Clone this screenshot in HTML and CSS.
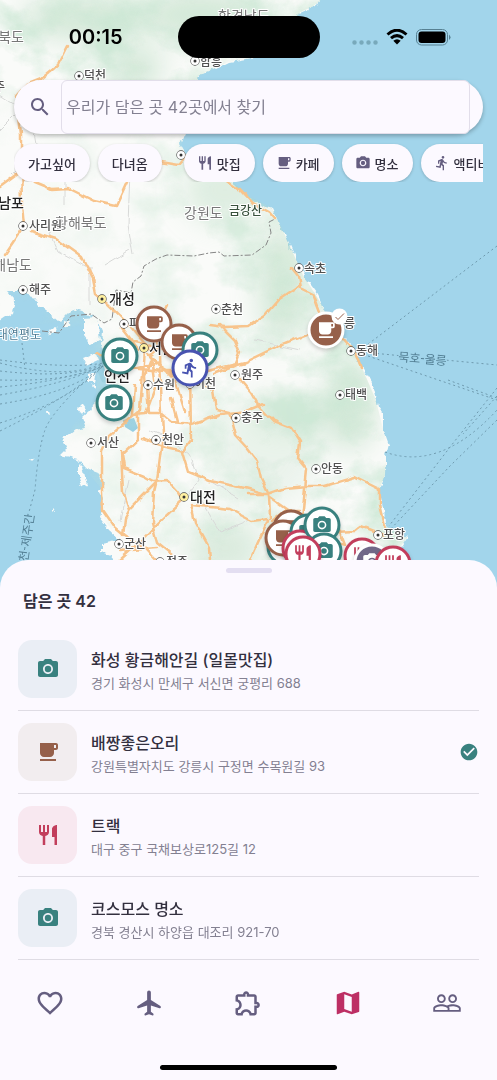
FILE: index.html
```html
<!DOCTYPE html>
<html lang="ko">
<head>
<meta charset="utf-8">
<meta name="viewport" content="width=device-width, initial-scale=1">
<title>담은 곳</title>
<link rel="stylesheet" href="styles.css">
</head>
<body>
<svg class="sprite" aria-hidden="true">
  <symbol id="search" viewBox="0 0 24 24"><path d="M15.5 14h-.79l-.28-.27C15.41 12.59 16 11.11 16 9.5 16 5.91 13.09 3 9.5 3S3 5.91 3 9.5 5.91 16 9.5 16c1.61 0 3.09-.59 4.23-1.57l.27.28v.79l5 4.99L20.49 19l-4.99-5zm-6 0C7.01 14 5 11.99 5 9.5S7.01 5 9.5 5 14 7.01 14 9.5 11.99 14 9.5 14z"/></symbol>
  <symbol id="food" viewBox="0 0 24 24"><path d="M11 9H9V2H7v7H5V2H3v7c0 2.12 1.66 3.84 3.75 3.97V22h2.5v-9.03C11.34 12.84 13 11.12 13 9V2h-2v7zm5-3v8h2.500v8H21V2c-2.760 0-5 2.240-5 4z"/></symbol>
  <symbol id="cafe" viewBox="0 0 24 24"><path d="M20 3H4v10c0 2.210 1.790 4 4 4h6c2.210 0 4-1.790 4-4v-3h2c1.110 0 2-.9 2-2V5c0-1.110-.89-2-2-2zm0 5h-2V5h2v3zM4 19h16v2H4z"/></symbol>
  <symbol id="camera" viewBox="0 0 24 24"><circle cx="12" cy="12" r="3.2"/><path d="M9 2L7.170 4H4c-1.100 0-2 .9-2 2v12c0 1.100.9 2 2 2h16c1.100 0 2-.9 2-2V6c0-1.100-.9-2-2-2h-3.170L15 2H9zm3 15c-2.760 0-5-2.240-5-5s2.240-5 5-5 5 2.240 5 5-2.240 5-5 5z"/></symbol>
  <symbol id="run" viewBox="0 0 24 24"><path d="M13.490 5.480c1.100 0 2-.9 2-2s-.9-2-2-2-2 .9-2 2 .9 2 2 2zm-3.600 13.900l1-4.400 2.100 2v6h2v-7.500l-2.100-2 .6-3c1.300 1.500 3.300 2.500 5.500 2.500v-2c-1.900 0-3.500-1-4.300-2.400l-1-1.600c-.4-.6-1-1-1.700-1-.3 0-.5.1-.8.1l-5.200 2.200v4.700h2v-3.400l1.800-.7-1.600 8.100-4.900-1-.4 2 7 1.400z"/></symbol>
  <symbol id="heart" viewBox="0 0 24 24"><path d="M16.500 3c-1.740 0-3.410.81-4.500 2.090C10.910 3.810 9.240 3 7.500 3 4.420 3 2 5.420 2 8.500c0 3.780 3.400 6.860 8.550 11.540L12 21.350l1.450-1.320C18.600 15.360 22 12.280 22 8.500 22 5.420 19.580 3 16.500 3zm-4.400 15.550l-.1.1-.1-.1C7.140 14.240 4 11.390 4 8.500 4 6.500 5.500 5 7.500 5c1.540 0 3.040.99 3.570 2.360h1.870C13.460 5.990 14.960 5 16.500 5c2 0 3.500 1.500 3.500 3.500 0 2.890-3.140 5.740-7.900 10.050z"/></symbol>
  <symbol id="flight" viewBox="0 0 24 24"><path d="M21.500 15.400c0-.5-.3-1-.7-1.200L13.500 9.500V3.500c0-.83-.67-1.500-1.500-1.500s-1.500.67-1.500 1.500v6l-7.300 4.700c-.4.200-.7.700-.7 1.200 0 .6.500.9 1.100.7l6.900-2.200V19l-1.800 1.300c-.2.100-.3.300-.3.500v.6c0 .4.300.6.700.5L12 21l2.900.9c.4.100.7-.1.7-.5v-.6c0-.2-.1-.4-.3-.5L13.500 19v-5.100l6.900 2.200c.6.200 1.100-.1 1.100-.7z"/></symbol>
  <symbol id="puzzle" viewBox="0 0 24 24"><path d="M10.500 4.500c.28 0 .5.22.5.5v2h6v6h2c.28 0 .5.22.5.5s-.22.5-.5.5h-2v6h-2.120c-.68-1.750-2.390-3-4.380-3s-3.700 1.250-4.380 3H4v-2.120c1.750-.68 3-2.390 3-4.380 0-1.990-1.240-3.700-2.990-4.380L4 7h6V5c0-.28.22-.5.5-.5m0-2C9.120 2.500 8 3.620 8 5H4c-1.100 0-1.990.9-1.990 2v3.800h.29c1.490 0 2.700 1.210 2.700 2.700s-1.210 2.700-2.700 2.700H2V20c0 1.100.9 2 2 2h3.800v-.3c0-1.490 1.210-2.700 2.700-2.700s2.700 1.210 2.700 2.700v.3H17c1.100 0 2-.9 2-2v-4c1.380 0 2.500-1.120 2.500-2.500S20.380 11 19 11V7c0-1.100-.9-2-2-2h-4c0-1.380-1.120-2.500-2.500-2.500z"/></symbol>
  <symbol id="map" viewBox="0 0 24 24"><path d="M20.500 3l-.16.03L15 5.100 9 3 3.360 4.900c-.21.07-.36.25-.36.48V20.500c0 .28.22.5.5.5l.16-.03L9 18.900l6 2.100 5.640-1.900c.21-.07.36-.25.36-.48V3.500c0-.28-.22-.5-.5-.5zM15 19l-6-2.110V5l6 2.110V19z"/></symbol>
  <symbol id="people" viewBox="0 0 24 24"><path d="M16.500 13c-1.200 0-3.070.34-4.500 1-1.430-.67-3.300-1-4.500-1C5.330 13 1 14.080 1 16.250V19h22v-2.750c0-2.170-4.330-3.250-6.500-3.250zm-4 4.500h-10v-1.250c0-.54 2.560-1.750 5-1.750s5 1.210 5 1.750v1.250zm9 0H14v-1.250c0-.46-.2-.86-.52-1.220.88-.3 1.960-.53 3.020-.53 2.440 0 5 1.210 5 1.750v1.250zM7.500 12c1.930 0 3.500-1.570 3.500-3.500S9.430 5 7.500 5 4 6.570 4 8.500 5.570 12 7.500 12zm0-5.500c1.100 0 2 .9 2 2s-.9 2-2 2-2-.9-2-2 .9-2 2-2zm9 5.500c1.930 0 3.500-1.570 3.500-3.500S18.430 5 16.500 5 13 6.570 13 8.500s1.570 3.500 3.500 3.500zm0-5.500c1.100 0 2 .9 2 2s-.9 2-2 2-2-.9-2-2 .9-2 2-2z"/></symbol>
  <symbol id="done" viewBox="0 0 24 24"><path d="M12 2C6.480 2 2 6.480 2 12s4.480 10 10 10 10-4.480 10-10S17.520 2 12 2zm-2 15l-5-5 1.410-1.410L10 14.170l7.590-7.590L19 8l-9 9z"/></symbol>
  <symbol id="check" viewBox="0 0 12 12"><path d="M2 6.500 4.500 9 10.500 3" fill="none" stroke="currentColor"/></symbol>
</svg>

<div class="screen">
  <section class="map-area" aria-label="지도">
    <div class="map-canvas">
      <svg class="map-art" viewBox="0 0 497 620" aria-hidden="true">
        <defs>
          <filter id="rough" x="0" y="0" width="1" height="1"><feTurbulence type="fractalNoise" baseFrequency=".12" numOctaves="3" seed="4"/><feDisplacementMap in="SourceGraphic" scale="7" xChannelSelector="R" yChannelSelector="G"/></filter>
          <filter id="bend" filterUnits="userSpaceOnUse" x="0" y="0" width="497" height="620"><feTurbulence type="fractalNoise" baseFrequency=".07" numOctaves="2" seed="9"/><feDisplacementMap in="SourceGraphic" scale="6" xChannelSelector="R" yChannelSelector="G"/></filter>
          <filter id="soft" x="-50%" y="-50%" width="200%" height="200%"><feGaussianBlur stdDeviation="14"/></filter>
          <filter id="relief" x="0" y="0" width="1" height="1"><feTurbulence type="fractalNoise" baseFrequency=".022 .028" numOctaves="5" seed="12"/><feColorMatrix values="0 0 0 0 .60  0 0 0 0 .80  0 0 0 0 .66  2.6 0 0 0 -1.050"/></filter>
          <clipPath id="land-clip"><path d="M0 0H321L312 7 300 12 297 19 280 40 252 58 228 62 214 69 198 76 196 110 186 132 181 145 190 160 215 172 235 184 250 197 272 208 285 235 303 275 322 305 332 325 350 345 362 368 376 400 382 425 388 445 385 475 379 490 384 525 407 538 398 550 393 620H105L112 552 120 540 104 520 102 490 78 460 62 440 96 396 98 360 60 322 0 330Z"/></clipPath>
          <linearGradient id="fade" x1="0" x2="1"><stop offset=".1" stop-color="#fff" stop-opacity=".12"/><stop offset=".6" stop-color="#fff" stop-opacity=".85"/></linearGradient>
          <mask id="relief-mask"><rect width="497" height="620" fill="url(#fade)"/><ellipse cx="90" cy="40" rx="110" ry="80" fill="#fff" opacity=".8" filter="url(#soft)"/></mask>
        </defs>
        <rect width="497" height="620" fill="#a2d5eb"/>
        <g filter="url(#rough)" fill="#fafbf9">
          <path d="M-9-9H326L316 6 300 12 297 19 280 40 252 58 228 62 214 69 198 76 196 110 186 132 181 145 190 160 215 172 235 184 248 197 262 206 273 209 278 220 285 235 296 260 305 277 317 293 324 308 330 321 350 345 362 368 374 388 378 405 383 412 383 428 389 445 386 457 386 475 379 490 383 507 384 525 392 533 408 537 399 550 394 560 396 630H107L112 555 101 551 101 544 121 540 110 530 100 517 104 500 98 490 104 484 99 474 88 470 78 459 60 455 66 449 62 440 75 430 86 428 82 417 91 409 98 396 110 384 101 374 104 360 101 345 102 332 96 318 82 311 73 308 65 316 60 322 50 313 38 304 28 291 7 291 15 300 12 313-9 327Z"/>
          <path d="M84 318 97 317 100 340 91 345 84 336ZM78 410 84 404 87 408 82 415ZM79 463 83 467 87 486 82 488 79 476ZM83 358 95 353 98 360 87 365ZM88 374 96 372 94 381 88 381ZM62 323 68 319 71 325 65 328ZM48 330 55 326 57 332 50 335ZM91 385 94 383 94 389ZM31 461 33 459 34 462ZM46 412 49 410 50 414ZM53 511 55 509 56 512Z"/>
        </g>
        <path d="M123 420 134 418 138 428 133 432 125 427ZM101 357 105 370 111 384 102 382 97 370Z" fill="#94cde4"/>
        <g clip-path="url(#land-clip)">
          <g filter="url(#soft)" fill="#abd5b5" opacity=".5">
            <ellipse cx="85" cy="18" rx="65" ry="22"/><ellipse cx="200" cy="15" rx="60" ry="24"/><ellipse cx="135" cy="68" rx="28" ry="22"/><ellipse cx="225" cy="190" rx="42" ry="35" opacity=".7"/><ellipse cx="283" cy="285" rx="24" ry="60"/><ellipse cx="350" cy="405" rx="26" ry="46"/><ellipse cx="292" cy="416" rx="38" ry="14"/><ellipse cx="225" cy="548" rx="38" ry="30" opacity=".8"/><ellipse cx="265" cy="450" rx="52" ry="55" opacity=".4"/>
          </g>
          <rect width="497" height="620" filter="url(#relief)" mask="url(#relief-mask)"/>
        </g>
        <g class="borders" filter="url(#bend)">
          <path d="M0 96 32 116 38 150 65 172 65 205M38 150 12 175M45 222 58 251 90 268 90 305M122 155 130 170 128 225 133 255M150 430 168 438 190 454 198 480 183 502M129 480 120 520M195 490 220 532 250 520M130 250 105 265M255 340 300 350M208 480 238 498M20 110 0 130"/>
        </g>
        <g class="frontier"><path d="M42 331 59 333 71 316 91 314 104 323 112 319 116 290 131 293 133 282 141 276 144 266 156 259 167 255 194 256 209 253 219 252 224 256 252 255 266 245 271 233 269 222 275 219"/></g>
        <g class="ferries">
          <path d="M0 360Q70 369 104 363M0 363Q65 380 101 364M0 371Q70 379 102 365M0 380Q70 382 103 366M0 387Q60 382 103 366M0 395Q65 384 103 366M0 404Q72 393 103 366M0 423Q72 400 103 366M0 431Q75 394 103 366M22 343 25 369M82 384Q50 415 45 430Q38 450 35 490L29 512M29 540 10 580"/>
          <path d="M497 246 367 345M372 353 497 365M368 356 497 400M448 380 497 398M385 452Q440 472 497 410M497 388 454 442 389 526M497 420 450 466 387 533M497 396 463 434"/>
        </g>
        <g class="roads" filter="url(#bend)">
          <path d="M67 47 58 65 42 78 27 84 17 95 19 116 21 135 21 160 22 205 24 226 5 254M0 187 22 171 35 182 52 189 68 188 94 201 116 206 128 180M160 162 178 165 187 155M31 231 57 239 82 257 93 279 96 294 103 300M225 180 240 190 252 203 269 212 275 219M291 267 299 277 301 288 313 294 321 315 335 330 355 353 361 368M299 286 278 300 265 315 248 326 225 327 210 325M315 331 280 345 245 362 207 371 165 371 125 368M220 325 235 340 240 353 235 366 214 374"/>
          <path d="M103 300 130 326 150 350M122 329 139 351M167 306 158 325M100 355 125 340 150 345 171 352M97 353 128 370 155 363 185 382M145 350 140 410 128 420 109 437 102 452 102 490 103 510 114 526 125 535 145 549 155 560M135 385 133 414 145 413 155 386 151 358 145 375 148 413 160 413 171 422 192 424 220 414 247 411 264 404M138 413 138 440 122 455 124 468 144 476 153 481 167 480 178 492 183 500 153 528 142 540 120 560M143 439 165 447 184 451 191 441 190 365M160 355 162 414 163 434 157 480 154 492 152 523 157 543 178 560M157 482 130 509 125 518 123 535M121 452 123 492 129 510M182 452 188 472 210 481 245 488 263 493M191 505 229 509 252 521 267 519M191 504 195 522 209 547 210 560M171 398 177 421M196 377 213 390 216 409 229 412 235 435 247 448 257 461 261 478 269 495 270 518"/>
          <path d="M240 379 252 393 260 407 273 421 291 428 300 442 298 459 307 470 302 518M247 494 268 494 285 488 308 486 325 486 355 477 379 489 379 505 385 529M269 496 300 518M268 520 250 560M335 532 355 531 361 526 385 535M272 521 285 510 299 510M340 532 345 545 325 540M151 324 159 348 151 355M148 354 175 380 185 412M120 551 157 548M152 325 158 317"/>
        </g>
        <g class="places">
          <g class="dots"><circle cx="79" cy="76" r="4"/><circle cx="195" cy="61" r="4"/><circle cx="181" cy="155" r="4"/><circle cx="23" cy="226" r="4"/><circle cx="23" cy="290" r="4"/><circle cx="124" cy="324" r="4"/><circle cx="148" cy="385" r="4"/><circle cx="190" cy="384" r="4"/><circle cx="216" cy="309" r="4"/><circle cx="235" cy="375" r="4"/><circle cx="299" cy="268" r="4"/><circle cx="351" cy="351" r="4"/><circle cx="340" cy="395" r="4"/><circle cx="236" cy="418" r="4"/><circle cx="316" cy="469" r="4"/><circle cx="378" cy="535" r="4"/><circle cx="91" cy="443" r="4"/><circle cx="156" cy="440" r="4"/><circle cx="119" cy="544" r="4"/><circle cx="160" cy="562" r="4"/></g>
          <g class="dots capital"><circle cx="102" cy="299" r="4"/><circle cx="144" cy="348" r="4"/><circle cx="184" cy="497" r="4"/></g>
          <path class="cores" d="M79 76h0M195 61h0M181 155h0M23 226h0M23 290h0M124 324h0M148 385h0M190 384h0M216 309h0M235 375h0M299 268h0M351 351h0M340 395h0M236 418h0M316 469h0M378 535h0M91 443h0M156 440h0M119 544h0M160 562h0M102 299h0M144 348h0M184 497h0"/>
          <g class="region"><text x="24" y="42" text-anchor="end">평안북도</text><text x="218" y="21">함경남도</text><text x="184" y="218">강원도</text><text x="55" y="228">황해북도</text><text x="32" y="270" text-anchor="end">황해남도</text></g>
          <g class="town"><text x="84" y="80">덕천</text><text x="200" y="66">함흥</text><text x="5" y="91" text-anchor="end">원주</text><text x="29" y="230">사리원</text><text x="29" y="294">해주</text><text x="129" y="328">파주</text><text x="153" y="389">수원</text><text x="194" y="388">이천</text><text x="221" y="314">춘천</text><text x="241" y="379">원주</text><text x="304" y="273">속초</text><text x="333" y="328">강릉</text><text x="356" y="355">동해</text><text x="345" y="399">태백</text><text x="241" y="422">충주</text><text x="321" y="473">안동</text><text x="383" y="539">포항</text><text x="97" y="447">서산</text><text x="162" y="444">천안</text><text x="124" y="548">군산</text><text x="166" y="566">전주</text></g>
          <g class="city"><text x="24" y="208" text-anchor="end">남포</text><text x="109" y="304">개성</text><text x="149" y="353">서울</text><text x="104" y="381">인천</text><text x="190" y="502">대전</text></g>
          <text class="peak" x="229" y="215">금강산</text>
          <text class="isle" x="41" y="339" text-anchor="end">대연평도</text>
          <text class="route" transform="translate(398 361) rotate(5)">묵호-울릉</text>
          <text class="route" transform="translate(26 573) rotate(-82)">인천-제주간</text>
        </g>
      </svg>
      <button class="pin brown" style="--x:154;--y:324" aria-label="카페"><svg><use href="#cafe"/></svg></button>
      <button class="pin brown" style="--x:179;--y:342" aria-label="카페"><svg><use href="#cafe"/></svg></button>
      <button class="pin teal" style="--x:200;--y:350" aria-label="명소"><svg><use href="#camera"/></svg></button>
      <button class="pin blue" style="--x:190;--y:368" aria-label="액티비티"><svg><use href="#run"/></svg></button>
      <button class="pin teal" style="--x:114;--y:403" aria-label="명소"><svg><use href="#camera"/></svg></button>
      <button class="pin teal" style="--x:120;--y:356" aria-label="명소"><svg><use href="#camera"/></svg></button>
      <button class="pin brown visited" style="--x:326;--y:330" aria-label="다녀온 카페"><svg><use href="#cafe"/></svg><span class="tick"><svg><use href="#check"/></svg></span></button>
      <button class="pin brown" style="--x:291;--y:528" aria-label="카페"><svg><use href="#cafe"/></svg></button>
      <button class="pin teal" style="--x:285;--y:547" aria-label="명소"><svg><use href="#camera"/></svg></button>
      <button class="pin brown" style="--x:283;--y:538" aria-label="카페"><svg><use href="#cafe"/></svg></button>
      <button class="pin teal" style="--x:308;--y:532" aria-label="명소"><svg><use href="#camera"/></svg></button>
      <button class="pin red" style="--x:300;--y:548" aria-label="맛집"><svg><use href="#food"/></svg></button>
      <button class="pin teal" style="--x:322;--y:525" aria-label="명소"><svg><use href="#camera"/></svg></button>
      <button class="pin teal" style="--x:324;--y:551" aria-label="명소"><svg><use href="#camera"/></svg></button>
      <button class="pin red" style="--x:303;--y:554" aria-label="맛집"><svg><use href="#food"/></svg></button>
      <button class="pin red" style="--x:362;--y:556" aria-label="맛집"><svg><use href="#food"/></svg></button>
      <button class="pin violet visited" style="--x:372;--y:562" aria-label="다녀온 곳"><svg><use href="#camera"/></svg></button>
      <button class="pin red" style="--x:393;--y:564" aria-label="맛집"><svg><use href="#food"/></svg></button>
    </div>

    <div class="overlay">
      <div class="status">
        <time class="clock">00:15</time>
        <span class="island"></span>
        <span class="signals">
          <svg class="cell" viewBox="0 0 26 5"><path d="M2.500 2.500h0M9.500 2.500h0M16.500 2.500h0M23.500 2.500h0" stroke="#78a9bb" stroke-width="4.500" stroke-linecap="round"/></svg>
          <svg class="wifi" viewBox="0 0 22 16"><path d="M1.500 5.500Q11-3 20.500 5.500M5 9.200Q11 4 17 9.200" fill="none" stroke="#000" stroke-width="3"/><path d="M7.300 11.700Q11 8.700 14.700 11.700L11 15.600Z"/></svg>
          <svg class="battery" viewBox="0 0 35 17"><rect x=".5" y=".5" width="31" height="15.500" rx="5" fill="none" stroke="#568092"/><rect x="2.500" y="2.500" width="27" height="11.500" rx="3"/><path d="M33 5.500q3 2.750 0 5.500z" fill="#568092"/></svg>
        </span>
      </div>
      <label class="search">
        <svg class="search-icon"><use href="#search"/></svg>
        <input type="search" placeholder="우리가 담은 곳 42곳에서 찾기" aria-label="담은 곳 찾기">
      </label>
      <div class="chips">
        <button class="chip">가고싶어</button>
        <button class="chip">다녀옴</button>
        <button class="chip category-start"><svg><use href="#food"/></svg>맛집</button>
        <button class="chip"><svg><use href="#cafe"/></svg>카페</button>
        <button class="chip"><svg><use href="#camera"/></svg>명소</button>
        <button class="chip"><svg><use href="#run"/></svg>액티비티</button>
      </div>
    </div>
  </section>

  <main class="sheet">
    <span class="grabber"></span>
    <h1>담은 곳 42</h1>
    <ul class="list">
      <li><a class="row" href="#place-1"><span class="tile teal"><svg><use href="#camera"/></svg></span><span class="info"><strong>화성 황금해안길 (일몰맛집)</strong><small>경기 화성시 만세구 서신면 궁평리 688</small></span></a></li>
      <li><a class="row" href="#place-2"><span class="tile brown"><svg><use href="#cafe"/></svg></span><span class="info"><strong>배짱좋은오리</strong><small>강원특별자치도 강릉시 구정면 수목원길 93</small></span><svg class="visited-mark" role="img" aria-label="다녀옴"><use href="#done"/></svg></a></li>
      <li><a class="row" href="#place-3"><span class="tile red"><svg><use href="#food"/></svg></span><span class="info"><strong>트랙</strong><small>대구 중구 국채보상로125길 12</small></span></a></li>
      <li><a class="row" href="#place-4"><span class="tile teal"><svg><use href="#camera"/></svg></span><span class="info"><strong>코스모스 명소</strong><small>경북 경산시 하양읍 대조리 921-70</small></span></a></li>
    </ul>
    <nav class="tabs" aria-label="주 메뉴">
      <a href="#likes" aria-label="좋아요"><svg><use href="#heart"/></svg></a>
      <a href="#trips" aria-label="여행"><svg><use href="#flight"/></svg></a>
      <a href="#puzzle-tab" aria-label="퍼즐"><svg><use href="#puzzle"/></svg></a>
      <a class="current" href="#map-tab" aria-label="지도" aria-current="page"><svg><use href="#map"/></svg></a>
      <a href="#friends" aria-label="친구"><svg><use href="#people"/></svg></a>
    </nav>
    <span class="home-bar"></span>
  </main>
</div>
</body>
</html>
```
FILE: styles.css
```css
:root {
  --surface: #fcf9ff;
  --ink: #33303f;
  --muted: #838091;
  --icon: #655e80;
}

* { box-sizing: border-box; }

body {
  margin: 0;
  background: var(--surface);
  color: var(--ink);
  font-family: Inter, "Noto Sans CJK KR", sans-serif;
}

svg { display: block; fill: currentColor; }
button, input { font: inherit; color: inherit; }
a { color: inherit; text-decoration: none; }
.sprite { position: absolute; width: 0; height: 0; }

.teal { --tone: #39817f; --tint: #eaeef5; }
.brown { --tone: #96604a; --tint: #f2edef; }
.red { --tone: #c23e5c; --tint: #f8e8f0; }
.blue { --tone: #4853b0; }
.violet { --tone: #716888; }

.screen {
  min-height: 100vh;
  display: flex;
  flex-direction: column;
}

/* Map */
.map-area {
  position: relative;
  flex: 1;
  min-height: 300px;
  overflow: hidden;
  background: #a2d5eb;
}
.map-canvas {
  position: absolute;
  top: 0;
  left: 0;
  width: 100%;
  aspect-ratio: 497 / 620;
}
.map-art { width: 100%; height: 100%; }
.borders { fill: none; stroke: #d8d9d8; stroke-width: 1; }
.frontier { fill: none; stroke: #858585; stroke-width: 1; stroke-dasharray: 6 2 2 2; }
.ferries { fill: none; stroke: #6f9aae; stroke-width: 1; stroke-dasharray: 2 3; }
.roads { fill: none; stroke: #f8c48c; stroke-width: 2.5; stroke-linejoin: round; stroke-linecap: round; }
.places {
  font-family: "Noto Sans CJK KR", sans-serif;
  paint-order: stroke;
  stroke: #fff;
  stroke-width: 2;
  stroke-linejoin: round;
}
.dots { fill: #fff; stroke: #4b4b4b; stroke-width: 1.3; }
.capital { fill: #fff0a0; }
.cores { stroke: #333; stroke-width: 3; stroke-linecap: round; }
.town { font-size: 12px; font-weight: 500; fill: #505050; }
.region { font-size: 14px; fill: #777; }
.city { font-size: 14px; font-weight: 500; fill: #222; }
.peak { font-size: 12px; font-weight: 500; fill: #38513c; }
.isle { font-size: 12px; fill: #4d7b93; }
.route { font-size: 12px; fill: #527e93; stroke: #a2d5eb; }

.pin {
  position: absolute;
  left: calc(var(--x) / 497 * 100%);
  top: calc(var(--y) / 620 * 100%);
  width: 37px;
  height: 37px;
  translate: -50% -50%;
  display: grid;
  place-items: center;
  padding: 0;
  border: 3px solid var(--tone);
  border-radius: 50%;
  background: #fff;
  color: var(--tone);
  box-shadow: 0 2px 4px #0003;
}
.pin > svg { width: 21px; height: 21px; }
.pin.visited { border-color: #fff; background: var(--tone); color: #fff; }
.tick {
  position: absolute;
  top: -6px;
  right: -6px;
  width: 16px;
  height: 16px;
  display: grid;
  place-items: center;
  border-radius: 50%;
  background: #fff;
  color: #96604a;
}
.tick svg { width: 12px; height: 12px; }

/* Controls over the map */
.overlay {
  position: relative;
  padding: 0 14px;
  margin-bottom: 48px;
}
.status {
  height: 80px;
  display: grid;
  grid-template-columns: 1fr 142px 1fr;
  align-items: center;
  padding-bottom: 6px;
  color: #000;
}
.clock {
  justify-self: center;
  font-size: 20px;
  font-weight: 600;
}
.island { height: 42px; border-radius: 21px; background: #000; }
.signals {
  display: flex;
  align-items: center;
  gap: 8px;
  justify-self: end;
  padding-right: 32px;
}
.cell { width: 26px; height: 5px; margin-top: 10px; }
.wifi { width: 22px; height: 16px; }
.battery { width: 35px; height: 17px; }

.search {
  height: 54px;
  display: flex;
  align-items: center;
  padding-right: 13px;
  border-radius: 27px;
  background: var(--surface);
  box-shadow: 0 2px 4px #0004;
}
.search-icon { width: 24px; height: 24px; margin: 0 9px 0 14px; color: var(--icon); }
.search input {
  flex: 1;
  min-width: 0;
  height: 54px;
  padding: 0 4px;
  border: 1px solid #e2deea;
  border-radius: 6px;
  background: var(--surface);
  font-size: 16px;
  outline: none;
  appearance: none;
}
.search input::placeholder { color: var(--muted); opacity: 1; }

.chips {
  display: flex;
  gap: 8px;
  padding-top: 10px;
  overflow: hidden;
}
.chip {
  flex: none;
  height: 38px;
  display: flex;
  align-items: center;
  gap: 5px;
  padding: 0 14px;
  border: 0;
  border-radius: 19px;
  background: var(--surface);
  box-shadow: 0 1px 3px #0003;
  font-size: 13px;
  font-weight: 500;
}
.chip svg { width: 16px; height: 16px; margin: 0 -1px; color: var(--icon); }
.category-start { margin-left: 14px; }

/* Bottom sheet */
.sheet {
  position: relative;
  margin-top: -28px;
  display: flex;
  flex-direction: column;
  border-radius: 28px 28px 0 0;
  background: var(--surface);
}
.grabber {
  align-self: center;
  width: 46px;
  height: 5px;
  margin-top: 8px;
  border-radius: 3px;
  background: #e3def1;
}
h1 {
  margin: 16px 23px 0;
  font-size: 16px;
  line-height: 24px;
  font-weight: 600;
}
.list {
  margin: 15px 18px 0;
  padding: 0;
  list-style: none;
}
.row {
  display: flex;
  align-items: center;
  gap: 14px;
  padding: 12px 0;
  border-bottom: 1px solid #dfdce4;
}
.tile {
  width: 59px;
  height: 58px;
  display: grid;
  place-items: center;
  border-radius: 14px;
  background: var(--tint);
  color: var(--tone);
}
.tile svg { width: 24px; height: 24px; }
.info { flex: 1; display: flex; flex-direction: column; gap: 1px; padding-top: 3px; }
.info strong { font-size: 16px; line-height: 24px; font-weight: 500; }
.info small { font-size: 13px; line-height: 20px; color: var(--muted); }
.visited-mark { width: 20px; height: 20px; color: #39817f; }

.tabs {
  display: grid;
  grid-template-columns: repeat(5, 1fr);
  padding-top: 28px;
}
.tabs a { display: grid; place-items: center; color: var(--icon); }
.tabs svg { width: 30px; height: 30px; }
.tabs .current { color: #bd2f64; }
.home-bar {
  align-self: center;
  width: 177px;
  height: 5px;
  margin: 47px 0 10px;
  border-radius: 3px;
  background: #000;
}
```
